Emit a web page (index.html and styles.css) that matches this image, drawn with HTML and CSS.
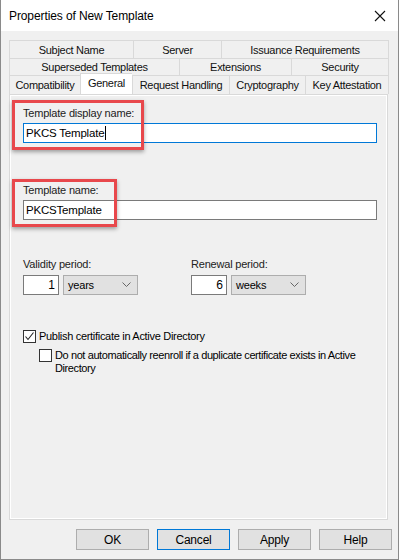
FILE: index.html
```html
<!DOCTYPE html>
<html lang="en">
  <head>
    <meta charset="UTF-8" />
    <title>Properties of New Template</title>
    <link rel="stylesheet" href="styles.css">
  </head>
  <body>
    <div class="window">
      <div class="titlebar">
        <span class="title">Properties of New Template</span>
        <svg class="close" width="12" height="12" viewBox="0 0 12 12">
          <path d="M1 1 L11 11 M11 1 L1 11" stroke="#111" stroke-width="1.1" fill="none" />
        </svg>
      </div>

      <div class="content">
        <div class="tabs">
          <div class="tab-row row-1">
            <div class="tab">Subject Name</div>
            <div class="tab">Server</div>
            <div class="tab">Issuance Requirements</div>
          </div>
          <div class="tab-row row-2">
            <div class="tab">Superseded Templates</div>
            <div class="tab">Extensions</div>
            <div class="tab">Security</div>
          </div>
          <div class="tab-row row-3">
            <div class="tab">Compatibility</div>
            <div class="tab selected">General</div>
            <div class="tab">Request Handling</div>
            <div class="tab">Cryptography</div>
            <div class="tab">Key Attestation</div>
          </div>
        </div>

        <div class="panel">
          <div class="field first">
            <label>Template display name:</label>
            <div class="textbox focused">PKCS Template<span class="caret"></span></div>
          </div>

          <div class="field second">
            <label>Template name:</label>
            <div class="textbox">PKCSTemplate</div>
          </div>

          <div class="periods">
            <div class="period">
              <label>Validity period:</label>
              <div class="period-inputs">
                <div class="number">1</div>
                <div class="select">
                  <span>years</span>
                  <svg width="9" height="6" viewBox="0 0 9 6"><polyline points="0.5,0.5 4.5,4.5 8.5,0.5" stroke="#666" fill="none" /></svg>
                </div>
              </div>
            </div>
            <div class="period">
              <label>Renewal period:</label>
              <div class="period-inputs">
                <div class="number">6</div>
                <div class="select">
                  <span>weeks</span>
                  <svg width="9" height="6" viewBox="0 0 9 6"><polyline points="0.5,0.5 4.5,4.5 8.5,0.5" stroke="#666" fill="none" /></svg>
                </div>
              </div>
            </div>
          </div>

          <div class="check publish">
            <span class="box">
              <svg width="11" height="11" viewBox="0 0 11 11"><polyline points="1.5,5.5 4,8.5 9.5,1.5" stroke="#222" stroke-width="1.1" fill="none" /></svg>
            </span>
            <span>Publish certificate in Active Directory</span>
          </div>
          <div class="check reenroll">
            <span class="box"></span>
            <span>Do not automatically reenroll if a duplicate certificate exists in Active Directory</span>
          </div>
        </div>

        <div class="buttons">
          <button>OK</button>
          <button class="default">Cancel</button>
          <button>Apply</button>
          <button>Help</button>
        </div>
      </div>

      <div class="mark mark-1"></div>
      <div class="mark mark-2"></div>
    </div>
  </body>
</html>
```

FILE: styles.css
```css
body {
  margin: 0;
  font-family: 'Liberation Sans', Arial, sans-serif;
  font-size: 11px;
  color: #000;
  background: #fff;
}

.window {
  position: relative;
  width: 399px;
  height: 560px;
  box-sizing: border-box;
  border-left: 1px solid #8a8a8a;
  border-right: 1px solid #8a8a8a;
  border-bottom: 1px solid #8a8a8a;
  background: #f0f0f0;
  overflow: hidden;
}

.titlebar {
  height: 31px;
  background: #fff;
  display: flex;
  align-items: center;
  justify-content: space-between;
  padding: 0 12px 0 8px;
}

.title {
  font-size: 12px;
  letter-spacing: -0.1px;
}

.content {
  padding: 9px 9px 0 8px;
}

/* tabs */

.tab-row {
  display: grid;
  height: 18px;
}

.row-1 {
  grid-template-columns: 124px 88px 1fr;
}

.row-2 {
  height: 17px;
  grid-template-columns: 170px 112px 1fr;
}

.row-3 {
  height: 19px;
  grid-template-columns: 71px 52px 97px 76px 1fr;
  align-items: end;
}

.tab {
  height: 100%;
  box-sizing: border-box;
  border: 1px solid #d9d9d9;
  border-bottom: none;
  border-right: none;
  background: #f0f0f0;
  display: flex;
  align-items: center;
  justify-content: center;
  white-space: nowrap;
  letter-spacing: -0.3px;
  color: #111;
}

.tab:last-child {
  border-right: 1px solid #d9d9d9;
}

.tab.selected {
  height: 21px;
  margin-top: -2px;
  background: #fff;
  padding-bottom: 3px;
  position: relative;
  z-index: 1;
}

/* panel */

.panel {
  height: 426px;
  box-sizing: border-box;
  border: 1px solid #d9d9d9;
  box-shadow: inset 1px 1px 0 #fff, inset -1px -1px 0 #fff;
  padding: 12px 10px 0 13px;
  margin-right: 1px;
}

.field label,
.period label {
  display: block;
  line-height: 13px;
  color: #222;
  letter-spacing: -0.2px;
}

.textbox {
  margin-top: 3px;
  height: 20px;
  box-sizing: border-box;
  background: #fff;
  border: 1px solid #7a7a7a;
  padding: 0 2px;
  display: flex;
  align-items: center;
  font-size: 11.5px;
  letter-spacing: -0.2px;
}

.textbox.focused {
  border-color: #0078d7;
}

.caret {
  display: inline-block;
  width: 1px;
  height: 14px;
  background: #000;
  margin-left: 1px;
}

.field.second {
  margin-top: 41px;
}

.periods {
  display: flex;
  margin-top: 38px;
}

.period {
  width: 168px;
}

.period-inputs {
  display: flex;
  gap: 4px;
  margin-top: 4px;
}

.number {
  width: 36px;
  height: 20px;
  box-sizing: border-box;
  background: #fff;
  border: 1px solid #7a7a7a;
  text-align: right;
  padding-right: 3px;
  font-size: 12px;
  line-height: 18px;
}

.select {
  width: 75px;
  height: 20px;
  box-sizing: border-box;
  background: #e1e1e1;
  border: 1px solid #adadad;
  display: flex;
  align-items: center;
  justify-content: space-between;
  padding: 0 6px 0 4px;
  letter-spacing: -0.2px;
}

.check {
  display: flex;
  align-items: flex-start;
  gap: 3px;
  line-height: 13px;
  letter-spacing: -0.3px;
}

.check .box {
  flex: none;
  width: 13px;
  height: 13px;
  box-sizing: border-box;
  border: 1px solid #333;
  background: #fff;
  display: flex;
  align-items: center;
  justify-content: center;
}

.publish {
  margin-top: 35px;
}

.reenroll {
  margin-top: 6px;
  margin-left: 16px;
  letter-spacing: -0.4px;
}

/* buttons */

.buttons {
  display: flex;
  justify-content: flex-end;
  gap: 8px;
  margin-top: 9px;
  margin-right: -3px;
}

button {
  width: 73px;
  height: 21px;
  background: #e1e1e1;
  border: 1px solid #adadad;
  font-family: inherit;
  font-size: 12px;
  color: #000;
  padding: 0;
  letter-spacing: -0.2px;
}

button.default {
  border-color: #0078d7;
}

/* red annotation boxes */

.mark {
  position: absolute;
  border: 3px solid #e8484c;
  box-shadow: 0 2px 4px rgba(0, 0, 0, 0.35);
}

.mark-1 {
  left: 11px;
  top: 100px;
  width: 126px;
  height: 44px;
}

.mark-2 {
  left: 11px;
  top: 179px;
  width: 99px;
  height: 42px;
}
```
